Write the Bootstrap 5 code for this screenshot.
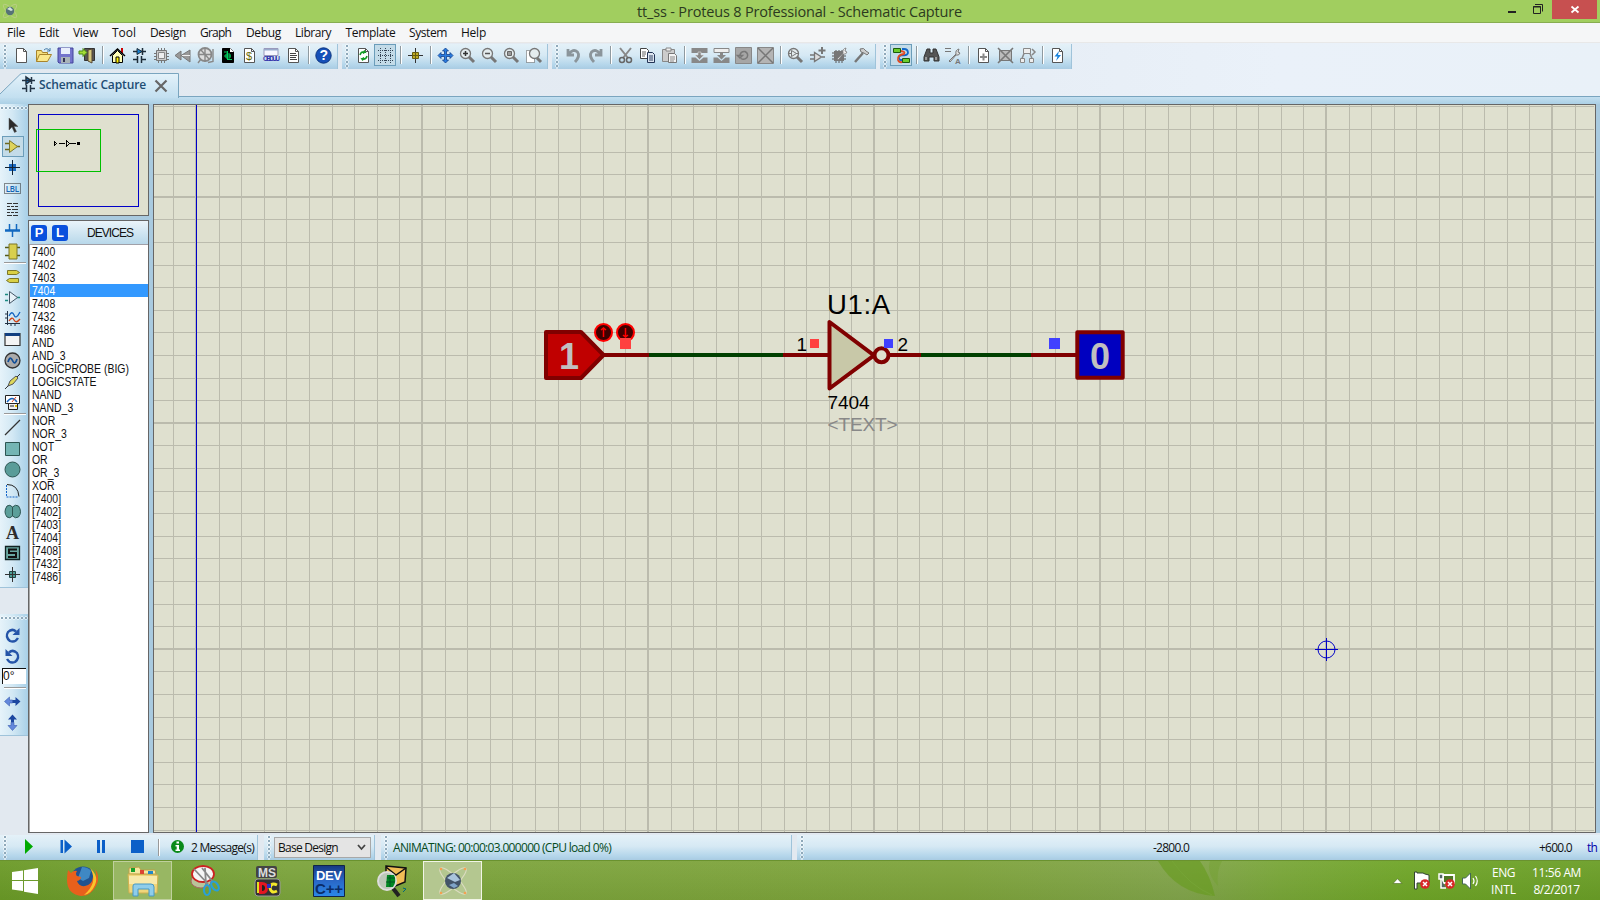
<!DOCTYPE html>
<html lang="en">
<head>
<meta charset="utf-8">
<meta name="viewport" content="width=device-width, initial-scale=1">
<title>tt_ss - Proteus 8 Professional - Schematic Capture</title>
<link href="https://cdn.jsdelivr.net/npm/bootstrap@5.3.0/dist/css/bootstrap.min.css" rel="stylesheet">
<style>
  body{width:1600px;height:900px;overflow:hidden;font:12px/1 "Open Sans","Noto Sans",sans-serif;color:#111;background:#e3eaf1}
  svg{display:block;flex:none}
  .fit{white-space:nowrap;display:inline-block}
  .titlebar{height:23px;background:#a1ce5f;border-bottom:1px solid #87ad50;position:relative}
  .titlebar h1{font-size:14.5px;line-height:23px;margin:0 0 0 637px;color:#2c3a20;font-weight:400}
  .appicon{position:absolute;left:2px;top:3px;opacity:.85}
  .winbtns{position:absolute;right:3px;top:0}
  .menubar{height:20px;background:#f5f6f7;border-bottom:1px solid #e8e8e8;padding-left:7px}
  .menubar .nav-link{padding:0;color:#111;line-height:19px;font-size:12px}
  .upper{height:61px;background:linear-gradient(90deg,#e2e9f0,#e4ebf3 50%,#eaf1f9 80%,#e9f1f8);padding-top:1px}
  .tgroup{height:25px;background:linear-gradient(#e4f1f8,#d6e9f4 45%,#b3d5ea 85%,#a9cbe2);border-right:1px solid #9fc3da;margin-right:4px}
  #bars .tb,#bars .vsep{position:relative;margin-bottom:3px}
  .grip{width:10px;height:25px;flex:none;background:radial-gradient(circle at 2px 2px,#8fa9ba 1px,#fff 1.2px,transparent 2px) 3px 0/10px 4px repeat-y}
  .tb{width:22px;height:22px;padding:0;border:1px solid transparent;border-radius:0;display:flex;align-items:center;justify-content:center;flex:none}
  .tb svg{overflow:visible}
  .tb.active{background:#c3dbe8;border-color:#6b9dba}
  .vsep{width:8px;height:18px;flex:none;background:linear-gradient(90deg,transparent 4px,#8f9aa0 4px,#8f9aa0 5px,#fff 5px,#fff 6px,transparent 6px)}
  .tabrow{height:35px;position:relative}
  .tabrow:after{content:"";position:absolute;left:178px;right:0;bottom:7px;height:1px;background:#7aa5bf}
  .tabrow .band{position:absolute;left:0;right:0;bottom:0;height:7px;background:linear-gradient(#c2dff0,#acd0e5)}
  .tabbox{position:absolute;left:0;top:4px;width:179px;height:25px}
  .tabname{left:39px;top:10px;color:#214d74}
  .work{height:729px;background:#a9cadf}
  .side{width:28px;background:#e2e9f0}
  .vgroup{background:linear-gradient(90deg,#e6f3fa,#d2e8f4 45%,#a8d0e8);border-bottom:1px solid #9fc3da}
  .vgroup .tb{width:22px;height:21px;margin-left:2px}
  .vgroup .tb svg{margin-left:-1px}
  .hgrip{height:11px;background:radial-gradient(circle at 2px 2px,#8fa9ba 1px,#fff 1.2px,transparent 2px) 0 2px/4px 11px repeat-x}
  .hsep{height:4px;margin:0 2px 0 4px;border-top:1px solid #999;background:linear-gradient(#fff 1px,transparent 1px)}
  .angle{width:24px;height:16px;margin:1px 0 3px 2px;background:#fff;border:solid #111;border-width:1px 0 0 1px;font:12px/14px "Liberation Sans",sans-serif}
  .panel{border:1px solid #666;background:#dfe0cf}
  .devhead{height:24px;background:linear-gradient(#eaf4fa,#b8d8ea);border-bottom:1px solid #a0a0a8;padding-left:2px}
  .pl{width:16px;height:16px;background:#0950dd;color:#fff;border-radius:3px;font:bold 13px/16px "Liberation Sans",sans-serif;text-align:center}
  .devs{font:12px/15px "Liberation Sans",sans-serif;background:#fff;flex:1;border-left:1px solid #aaa}
  .devs li{height:13px;padding-left:1.5px}
  .devs span{display:inline-block;transform:scaleX(.87);transform-origin:0 0;white-space:nowrap}
  .devs .sel{background:#3399ff;color:#fff}
  .status{height:27px;padding-top:2px;background:#e2e9f0}
  .status .tgroup,.status .grip{height:25px}
  .task{height:40px;background:linear-gradient(rgba(255,255,255,.05),rgba(0,30,0,.05)),linear-gradient(90deg,#6b9a27,#7ca43c 18%,#7ea33b 60%,#82a44b 74%,#79a638 80%,#6fa527 88%,#6b9e27);border-top:1px solid #6a922f;position:relative}
  .task .slot{height:39px;flex:none;display:flex;align-items:center;justify-content:center;border:1px solid transparent}
  .tray{color:#fff;font-size:12px}
  .tray .fit{line-height:17px}
  .combo{width:97px;height:21px;background:#e4e4e4;border:1px solid #a8a8a8;padding:0 4px 0 3px}
  .leaf{position:absolute;left:1140px;top:0}
</style>
</head>
<body class="d-flex flex-column">
<header class="titlebar">
  <svg class="appicon" width="16" height="16" viewBox="0 0 16 16"><g fill="none" stroke="#c3cf92" stroke-width=".8"><ellipse cx="8" cy="8" rx="9" ry="3" transform="rotate(45 8 8)"/><ellipse cx="8" cy="8" rx="9" ry="3" transform="rotate(-45 8 8)"/></g><circle cx="8" cy="8" r="4.200" fill="#49627c"/><path d="M5 6l3-2 3 3-2 1z" fill="#dce8f2"/></svg>
  <h1><span class="fit" data-w="325">tt_ss - Proteus 8 Professional - Schematic Capture</span></h1>
  <svg class="winbtns" width="95" height="22"><path d="M6 11h8v2H6z" fill="#222"/><path d="M31.500 6.500h7v7h-7zM31 7h8M33 4.500h7.500v7" fill="none" stroke="#222"/><path d="M50 0h45v19H50z" fill="#c75050"/><path d="M69.500 6.500l7 6m0-6l-7 6" stroke="#fff" stroke-width="1.800"/></svg>
</header>
<nav class="menubar">
  <ul class="nav flex-nowrap" id="menu"></ul>
</nav>
<div class="upper">
  <div class="d-flex" id="bars"></div>
  <div class="tabrow">
    <div class="band"></div>
    <svg class="tabbox" viewBox="0 0 179 25"><defs><linearGradient id="tg" x2="0" y2="1"><stop stop-color="#e4f2fa"/><stop offset="1" stop-color="#c2dff0"/></linearGradient></defs><path d="M0 21L20 1.500Q21 .5 23 .5H178.500V25H0z" fill="url(#tg)"/><path d="M0 21L20 1.500Q21 .5 23 .5H178.500V25" fill="none" stroke="#7aa5bf"/>
      <g stroke="#234" fill="none"><path d="M22 7.500h13M26 4v7l5-3.500zM31.500 4v7M22 15.500h4m5 0h4M26.500 12v7M30.500 12v7" fill="#1b78c8" stroke-width="1.500"/></g>
      <path d="M155.500 7.500l11 11m0-11l-11 11" stroke="#666" stroke-width="2.200"/></svg>
    <span class="fit position-absolute fw-semibold tabname" data-w="107">Schematic Capture</span>
  </div>
</div>
<main class="work d-flex">
  <aside class="side">
    <div class="vgroup" id="modes"></div>
    <div style="height:26px"></div>
    <div class="vgroup" id="rotate"></div>
  </aside>
  <section class="d-flex flex-column" style="width:121px">
    <div class="panel" style="height:112px">
      <svg width="119" height="110" viewBox="29 105 119 110" fill="none" shape-rendering="crispEdges"><path d="M38.500 114.500h100v92h-100z" stroke="#0000c8"/><path d="M36.500 129.500h64v42h-64z" stroke="#00c000"/><path d="M59 143.500h6M69 143.500h7" stroke="#000"/><path d="M54.500 142v3l2-1.500zM66.500 141v5l3-2.500z" stroke="#000"/><path d="M77 142h3v3h-3z" fill="#000"/></svg>
    </div>
    <div class="panel d-flex flex-column flex-fill" style="margin-top:4px">
      <div class="devhead d-flex align-items-center"><b class="pl">P</b><b class="pl" style="margin-left:5px">L</b><span class="fit" style="margin-left:19px;font-family:'Liberation Sans',sans-serif" data-w="46">DEVICES</span></div>
      <ul class="devs list-unstyled mb-0" id="devs"></ul>
    </div>
  </section>
  <section class="panel" style="margin-left:4px;width:1443px;height:729px">
    <svg width="1441" height="727" viewBox="154 105 1441 727">
      <path id="minor" stroke="#bbbbad" shape-rendering="crispEdges"/>
      <path id="major" stroke="#bbbbad" stroke-width="2" shape-rendering="crispEdges"/>
      <path d="M196.500 105v727" stroke="#0000c8" shape-rendering="crispEdges"/>
      <g stroke-width="4" stroke="#800000" fill="none">
        <path d="M603 355h46M783 355h46M889 355h32M1031 355h45"/>
        <path d="M649 355h134M921 355h110" stroke="#004000"/>
        <path d="M546 332h35l22.500 23L581 378h-35z" fill="#c00000" stroke-linejoin="round"/>
        <path d="M829.500 322v66.500L874 355.300z" fill="#c8c8a8" stroke-linejoin="round"/>
        <circle cx="881.500" cy="355.300" r="7" fill="#dfe0cf"/>
        <path d="M1077.300 332.300h45.400v45.400h-45.400z" fill="#0000c0" stroke-linejoin="round"/>
      </g>
      <g stroke="#f00" stroke-width="2" fill="#400000"><circle cx="603.500" cy="332.500" r="8.500"/><circle cx="625.500" cy="332.500" r="8.500"/><path d="M603.500 337v-9m-2.500 2l2.500-2 2.500 2M625.500 328v9m-2.500-2l2.500 2 2.500-2" stroke-width="1.500"/></g>
      <path d="M620 338h11v11h-11zM810 339h9v9h-9z" fill="#ff4040"/><path d="M884 339h9v9h-9zM1049 338h11v11h-11z" fill="#4040ff"/>
      <g font-family="Liberation Sans, sans-serif">
        <g font-size="36" font-weight="700" fill="#c0c0c0"><text x="559" y="368.500">1</text><text x="1090" y="368.500">0</text></g>
        <text x="827" y="313.500" font-size="27.500" textLength="63">U1:A</text><text x="827.500" y="408.500" font-size="19" textLength="42">7404</text><text x="827.500" y="430.500" font-size="19" fill="#888" textLength="70">&lt;TEXT&gt;</text>
        <text x="796.500" y="350.500" font-size="19">1</text><text x="897.500" y="350.500" font-size="19">2</text>
      </g>
      <g stroke="#0000c8" fill="none"><circle cx="1326.500" cy="649.500" r="8.500"/><path d="M1315 649.500h23M1326.500 638v23"/></g>
    </svg>
  </section>
</main>
<div class="status d-flex">
  <div class="tgroup d-flex align-items-center" style="width:258px;margin-right:6px">
    <div class="grip"></div>
    <svg width="180" height="25" viewBox="10 835 180 25"><path d="M25 839l8 7.500-8 7.500z" fill="#0a0"/><path d="M60.500 840h2.500v13h-2.500zM64.500 839.500l7.500 7-7.500 7zM97 840h3v13h-3zM102 840h3v13h-3zM131 840h13v13h-13z" fill="#0b5fc8"/><path d="M158.500 839v17" stroke="#999"/><path d="M159.500 839v17" stroke="#fff"/><circle cx="177.500" cy="846.500" r="6.500" fill="#0a8a1a"/><path d="M176.500 841.500h2.500v2h-2.500zM175.500 845h3.500v4.500h1v1.500h-4.500v-1.500h1.200v-3h-1.200z" fill="#fff"/></svg>
    <span class="fit" style="margin-left:1px" data-w="63">2 Message(s)</span>
  </div>
  <div class="tgroup d-flex align-items-center" style="width:111px;margin-right:6px">
    <div class="grip"></div>
    <div class="combo d-flex align-items-center justify-content-between"><span class="fit" data-w="60">Base Design</span><svg width="9" height="7"><path d="M1 1l3.500 4L8 1" fill="none" stroke="#444" stroke-width="1.800"/></svg></div>
  </div>
  <div class="tgroup d-flex align-items-center" style="width:411px;margin-right:5px">
    <div class="grip"></div><span class="fit" style="margin-left:2px;color:#064a1c" data-w="218">ANIMATING: 00:00:03.000000 (CPU load 0%)</span>
  </div>
  <div class="tgroup d-flex align-items-center flex-fill m-0 border-0">
    <div class="grip"></div><span class="fit" style="margin-left:346px" data-w="36">-2800.0</span><span class="fit" style="margin-left:350px" data-w="33">+600.0</span><span class="fit" style="margin-left:15px;color:#00a" data-w="10">th</span>
  </div>
</div>
<footer class="task d-flex">
  <svg class="leaf" width="120" height="39"><path d="M18 0h42q10 14 15 35-38-2-57-35z" fill="#659b1c" opacity=".6"/><path d="M32 0q18 25 40 34" stroke="#79a93c" stroke-opacity=".5" fill="none"/><path d="M70 0q-4 12 8 25-2-15 4-25z" fill="#719f2d" opacity=".4"/></svg>
  <div class="slot" style="width:50px"><svg width="26" height="26"><path d="M0 4l11-1.500V12H0zM12 2.300L26 0v12H12zM0 13h11v10L0 21.500zM12 13h14v13l-14-2.300z" fill="#fff"/></svg></div>
  <div class="slot" style="width:63px"><svg width="32" height="32" viewBox="0 0 32 32"><circle cx="17" cy="14" r="12.500" fill="#21528f"/><path d="M16 2q6 0 9 4l-2 7-6 3-5-3z" fill="#3f88c4"/><path d="M2 5l3 3q3-3 6-2-2 3 0 5l4 1q0 3-4 4 2 6 8 5 7-1 8-9 2 3 1 5 4-4 1-13 6 8 1 17-5 10-15 10Q1 29 1 15q0-5 1-10z" fill="#e8601c"/><path d="M24 3q9 8 5 17-4 9-11 10 7-6 9-13 1-8-3-14z" fill="#fbc52c"/></svg></div>
  <div class="slot" style="width:59px;background:#98b763;border-color:#bfd09d"><svg width="34" height="32" viewBox="0 0 34 32"><path d="M3 3l10-1 2 3h14l1 4H3z" fill="#f6e8a0" stroke="#b9a04a"/><path d="M5 3h4v4H5z" fill="#16a02a"/><path d="M14 5h4v4h-4z" fill="#d43"/><path d="M22 6h5v3h-5z" fill="#28c"/><path d="M2 9l30 1-1 18H3z" fill="#f0d67b" stroke="#d0b050"/><path d="M3 11h28v8H3z" fill="#f8e9aa"/><path d="M7 31V21q0-2 2-2h16q3 0 3 3v9h-5v-7H12v7z" fill="#8fcdea" stroke="#4698c4"/></svg></div>
  <div class="slot" style="width:65px"><svg width="30" height="32" viewBox="0 0 30 32"><ellipse cx="11" cy="16" rx="10" ry="7" fill="#b9c49a" stroke="#a66"/><ellipse cx="13" cy="9" rx="11" ry="8" fill="#f6f6f6" stroke="#c22" stroke-width="1.800"/><path d="M4 4l14 15M12 3l11 14M15 3l1 17" stroke="#888" stroke-width="1.800"/><ellipse cx="17" cy="25" rx="3" ry="5" fill="none" stroke="#28a0d8" stroke-width="2.200"/><ellipse cx="25" cy="21" rx="3" ry="5" transform="rotate(-35 25 21)" fill="none" stroke="#28a0d8" stroke-width="2.200"/></svg></div>
  <div class="slot" style="width:60px"><svg width="27" height="32" viewBox="0 0 27 32"><rect x="2" y="1" width="21" height="12" rx="2" fill="#444"/><rect x="1" y="14" width="25" height="17" rx="3" fill="#333" stroke="#999"/><path d="M3 17h4v11H3z" fill="#e3e021"/><text x="4" y="11.500" font-family="Liberation Sans" font-weight="700" font-size="12" fill="#ddd">MS</text><path d="M5 17h3q6 0 6 6t-6 6H5z" fill="#e41620"/><path d="M8 20q3 0 3 3t-3 3z" fill="#222"/><path d="M23 20q-6-3-7 3 1 6 7 3" fill="none" stroke="#f4e82a" stroke-width="3"/><path d="M13 19h4v4h-4z" fill="#2630c8"/></svg></div>
  <div class="slot" style="width:64px"><svg width="32" height="32" viewBox="0 0 32 32"><defs><linearGradient id="dv" x2="0" y2="1"><stop stop-color="#153880"/><stop offset=".5" stop-color="#2a68c8"/><stop offset="1" stop-color="#2a88e8"/></linearGradient></defs><path d="M.5.5h31v31H.5z" fill="url(#dv)" stroke="#102448"/><g font-family="Liberation Sans" font-weight="700"><text x="3" y="15" font-size="13" fill="#fff" textLength="26">DEV</text><text x="2" y="29" font-size="15" fill="#0b2c68" textLength="28">C++</text></g></svg></div>
  <div class="slot" style="width:62px"><svg width="33" height="34" viewBox="0 0 33 34"><path d="M10 2l20 2-1 14-12 5-7-4z" fill="#f1bd56" stroke="#111" stroke-width="1.500"/><path d="M10 3l10 8 10-7" fill="none" stroke="#111" stroke-width="1.500"/><path d="M16 23l7 9" stroke="#222" stroke-width="4"/><circle cx="11" cy="17" r="9" fill="#bcc8b8" stroke="#ddd" stroke-width="2"/><path d="M11 11h7q3 6-1 12h-7z" fill="#082"/><path d="M11 14h8M10 18h9M14 11v12" stroke="#052"/><path d="M27 24l3 1-3 3" stroke="#067" fill="none"/></svg></div>
  <div class="slot" style="width:59px;background:#b4c790;border-color:#f1f5e6"><svg width="30" height="30" viewBox="0 0 30 30"><g fill="none" stroke="#dcdcc2" stroke-width="1.100"><ellipse cx="15" cy="15" rx="18" ry="5" transform="rotate(45 15 15)"/><ellipse cx="15" cy="15" rx="18" ry="5" transform="rotate(-45 15 15)"/></g><circle cx="15" cy="15" r="8" fill="#435468"/><path d="M9 12l7-5 6 7-5 2z" fill="#a9c4dc"/><path d="M11 19l5-2 4 3-4 2z" fill="#7fa4c8"/><g fill="#f5a050"><circle cx="3" cy="3" r="1.300"/><circle cx="27" cy="3" r="1.300"/><circle cx="3" cy="27" r="1.300"/><circle cx="27" cy="27" r="1.300"/></g></svg></div>
  <div class="tray d-flex ms-auto align-items-start" style="padding-right:19px">
    <svg width="95" height="39" viewBox="1390 861 95 39"><path d="M1393 883.500h9l-4.500-4.800z" fill="#fff" stroke="#4b6b20" stroke-width=".6"/>
      <path d="M1414.500 873v16h2.500v-6h12v-8q-5-1-6-2h-6v-1h-2.500z" fill="#fff" stroke="#343"/><circle cx="1425" cy="884" r="4.800" fill="#d82828"/><path d="M1423 882l4 4m0-4l-4 4" stroke="#fff" stroke-width="1.500"/>
      <path d="M1443 875h11v8h-11z" fill="#4e7624" stroke="#fff" stroke-width="1.800"/><path d="M1439 874h4v5h-4zM1441 879v9h5" fill="#566" stroke="#fff" stroke-width="1.500"/><circle cx="1450" cy="884" r="4.800" fill="#d82828"/><path d="M1448 882l4 4m0-4l-4 4" stroke="#fff" stroke-width="1.500"/>
      <path d="M1462.500 878h3l5-5v16l-5-5h-3z" fill="#fff" stroke="#465"/><path d="M1473 878q2 3 0 6M1475.500 876q3.500 5 0 10" fill="none" stroke="#fff" stroke-width="1.200"/></svg>
    <div class="d-flex flex-column text-center" style="margin:3px 16px 0 6px"><span class="fit" data-w="23">ENG</span><span class="fit" data-w="25">INTL</span></div>
    <div class="d-flex flex-column align-items-center" style="margin-top:3px"><span class="fit" data-w="49">11:56 AM</span><span class="fit" data-w="46">8/2/2017</span></div>
  </div>
</footer>
<script src="https://cdn.jsdelivr.net/npm/bootstrap@5.3.0/dist/js/bootstrap.bundle.min.js"></script>
<script>
const $ = id => document.getElementById(id);
// menu: label, text width, distance to the next item
$('menu').innerHTML = [['File',18,32],['Edit',20,34],['View',25,39],['Tool',24,38],['Design',36,50],['Graph',31,46],['Debug',35,49],['Library',36,50.5],['Template',50,63.5],['System',38,52],['Help',25,40]]
  .map(([t,w,n]) => `<li class="nav-item" style="width:${n}px"><a class="nav-link"><span class="fit" data-w="${w}">${t}</span></a></li>`).join('');

// icons on a 17-unit grid
const page = '<path d="M3.500 1.500h7l3 3v11h-10z" fill="#fff" stroke="#555"/><path d="M10.500 1.500v3h3" fill="none" stroke="#555"/>';
const lens = c => `<path d="M10 10l5 5" stroke="#777" stroke-width="3"/><circle cx="6.500" cy="6.500" r="5" fill="#e4ecee" stroke="#777" stroke-width="1.300"/>${c}`;
const I = {
 new: page,
 open: '<path d="M1.500 14.500v-11h5l1 2h5v3" fill="#f5df7c" stroke="#a8842c"/><path d="M1.500 14.500l3-7h12l-4 7z" fill="#fbe98c" stroke="#a8842c"/><path d="M9 3q3-3 6 1m0-3v3h-3" stroke="#457aa8" fill="none"/>',
 save: '<path d="M1 1h15v15H2l-1-1z" fill="#7373cc" stroke="#44449a"/><path d="M4 1h9v6H4z" fill="#e8eefc"/><path d="M4 10h9v6H4z" fill="#a9b4b9"/><path d="M6 11h2v4H6z" fill="#335"/>',
 exit: '<path d="M5.500 1.500h10v12h-10z" fill="#555" stroke="#333"/><path d="M9 3l4-1v14l-4-2z" fill="#d4c77e" stroke="#543"/><path d="M0 4h4V1.500l4 4-4 4V7H0z" fill="#a4dd38" stroke="#4b8a18"/>',
 home: '<path d="M12 1h2v5h-2z" fill="#c00"/><path d="M3.500 8.500v7h10v-7l-5-5z" fill="#ffffb8" stroke="#000"/><path d="M1 9l7.500-7L16 9" fill="none" stroke="#000" stroke-width="1.500"/><path d="M7 10h3v6H7z" fill="#fff200" stroke="#000"/>',
 sch: '<path d="M2 4.500h13M2 12.500h4m4 0h5M6.500 9v7M10.500 9v7M11.500 1v7" stroke="#1d2c38" stroke-width="1.500"/><path d="M6 1.500v6l5-3z" fill="#1981cf" stroke="#1d2c38"/>',
 chip: '<path d="M1 6.500h15M1 9.500h15M1 12.500h15M5.500 1v15M8.500 1v15M11.500 1v15" stroke="#777" stroke-width="1"/><path d="M3.500 3.500h10v10h-10z" fill="#ccc" stroke="#777"/><path d="M5.500 5.500h6v6h-6z" fill="#eee" stroke="#888"/>',
 view3: '<path d="M0 8.500L6 4v9zM6 8.500L15 3v12z" fill="#999" stroke="#777"/><path d="M7 8.500h8" stroke="#eee"/>',
 globe: '<circle cx="8" cy="7.500" r="6.500" fill="#ddd" stroke="#888" stroke-width="1.800"/><path d="M8 1v14M2 7.500h12M4 3l8 9M11 15.500l5-1V2M4 12l-3 4" stroke="#888" stroke-width="1.400" fill="none"/>',
 pcb: '<path d="M3.500 1.500h8l3 3v11h-11z" fill="#000" stroke="#000"/><path d="M11 1l4 4h-4z" fill="#fff"/><path d="M5 5h4M9 12.500h4M8.500 4v9M5 9h7M7 7h4v4H7z" stroke="#00d060" fill="none"/>',
 bom: page+'<text x="5" y="13" font-size="11" font-family="Liberation Sans" fill="#666600">$</text>',
 code: '<path d="M1 1.500h14v7H1z" fill="#f7f7ff" stroke="#99b"/><path d="M1 2h14v1.500H1z" fill="#9ac"/><text x="0" y="14" font-size="6.500" font-weight="700" font-family="Liberation Sans" fill="#33a" textLength="17">OBDUU</text>',
 doc: page+'<path d="M5 6.500h6M5 8.500h7M5 10.500h6M5 12.500h7" stroke="#444"/>',
 help: '<circle cx="8.500" cy="8.500" r="7.700" fill="#1550b8" stroke="#0c3580"/><text x="4.500" y="13.300" font-size="14" font-weight="700" font-family="Liberation Sans" fill="#fff">?</text>',
 refresh: page+'<path d="M5 8q1-4 5-3l-1-1.500m1 1.500l-2 1.500M12 9q-1 4-5 3l1 1.500M7 12l2-1.500" stroke="#119a22" stroke-width="1.500" fill="none"/>',
 grid: '<path d="M1 3.500h15M1 8.500h15M1 13.500h15M3.500 1v15M8.500 1v15M13.500 1v15" stroke="#345" stroke-dasharray="1 1"/>',
 origin: '<path d="M8.500 1v15M1 8.500h15" stroke="#333"/><path d="M5.500 5.500h6v6h-6z" fill="#c0ac24" stroke="#665c10"/><path d="M8.500 5v7M5 8.500h7" stroke="#665c10"/>',
 pan: '<path d="M8.500 1l3 3h-2v3.500H13v-2l3 3-3 3v-2H9.500V13h2l-3 3-3-3h2V9.500H4v2l-3-3 3-3v2h3.500V4h-2z" fill="#2a7de0" stroke="#123f8c" stroke-width=".8"/>',
 zin: lens('<path d="M4 6.500h5M6.500 4v5" stroke="#333" stroke-width="1.500"/>'),
 zout: lens('<path d="M4 6.500h5" stroke="#555" stroke-width="1.500"/>'),
 zall: lens('<path d="M4.500 4.500h4v4h-4z" fill="#999" stroke="#666"/>'),
 zarea: '<path d="M1.500 3.500h8v12h-8z" fill="#fff" stroke="#555" stroke-dasharray="1 1"/><path d="M12 11l4 4" stroke="#777" stroke-width="3"/><circle cx="9.500" cy="6.500" r="5" fill="#e4ecee" stroke="#777" stroke-width="1.300"/>',
 undo: '<path d="M3 2v6h6M3.500 7.500Q8 1 12.500 5q3 4-2.500 10" fill="none" stroke="#8b959b" stroke-width="2.800"/>',
 redo: '<path d="M14 2v6H8M13.500 7.500Q9 1 4.500 5q-3 4 2.500 10" fill="none" stroke="#8b959b" stroke-width="2.800"/>',
 cut: '<path d="M3 1l8 10M14 1L6 11" stroke="#888" stroke-width="2"/><circle cx="5" cy="13" r="2.500" fill="none" stroke="#666" stroke-width="1.500"/><circle cx="12" cy="13" r="2.500" fill="none" stroke="#666" stroke-width="1.500"/>',
 copy: '<path d="M1.500 1.500h6l2 2v8h-8z" fill="#fff" stroke="#444"/><path d="M3 5h4M3 7h4M3 9h3" stroke="#666"/><path d="M8.500 5.500h5l2 2v8h-7z" fill="#dde6f0" stroke="#235"/><path d="M10 9h4M10 11h4M10 13h4" stroke="#346"/>',
 paste: '<path d="M1.500 2.500h12v12h-12z" fill="#ccc" stroke="#888"/><path d="M5 1h5v3H5z" fill="#eee" stroke="#888"/><path d="M7.500 6.500h6l2 2v7h-8z" fill="#f4f4f4" stroke="#777"/><path d="M9 10h5M9 12h5M9 14h4" stroke="#888"/>',
 bcopy: '<path d="M.5 1h16v5H.5zM.5 10.500h4l4 3.500 4-3.500h4V16H.5z" fill="#888"/><path d="M7 5h3v3h3l-4.500 4.500L4 8h3z" fill="#888" stroke="#ddd" stroke-width=".6"/>',
 bmove: '<path d="M1 1.500h15v4H1z" fill="#eee" stroke="#888"/><path d="M.5 10.500h4l4 3.500 4-3.500h4V16H.5z" fill="#888"/><path d="M7 5h3v3h3l-4.500 4.500L4 8h3z" fill="#888"/>',
 brot: '<path d="M.5.5h16v16H.5z" fill="#a6a6a6" stroke="#888"/><path d="M5 8q1-4 5-3.500 4 2 2 6-3 3-6 1M2.500 8.500h5L5 11z" stroke="#777" stroke-width="1.500" fill="none"/>',
 bdel: '<path d="M.5.5h16v16H.5z" fill="#b4b4b4" stroke="#888"/><path d="M1 1l15 15M16 1L1 16" stroke="#777" stroke-width="1.500"/>',
 pick: lens('<path d="M4.500 3.500v6l5-3zM1 6.500h3m5 0h3" fill="none" stroke="#777"/>'),
 make: '<path d="M5.500 5.500v9l7-4.500zM1 8h4M1 12h4m8-2h3" fill="#ddd" stroke="#777" stroke-width="1.300"/><path d="M13 0v7M9.500 3.500h7" stroke="#777" stroke-width="2"/>',
 pack: '<path d="M1 6h14M1 9h14M1 12h14M5 3v13M8 3v13M11 3v13" stroke="#555"/><path d="M3 4h10v10H3z" fill="#777"/><path d="M6 12l6-6q-1-4 3-5l-1 3 2 1q-1 3-4 2l-5 6z" fill="#eee" stroke="#777" stroke-width=".8"/>',
 decomp: '<path d="M2 15l8-9" stroke="#777" stroke-width="2.500"/><path d="M7 2q4-2 6 2l3 2-2 2-3-2-3-1z" fill="#ccc" stroke="#777"/>',
 wire: '<path d="M9 2h2q4 0 4 4-1 3-6 2Q4 9 7 13h3" fill="none" stroke="#1268c8" stroke-width="1.800"/><path d="M6 4q7 0 5 3-7 1-6 6 1 3 5 2" fill="none" stroke="#e04a20" stroke-width="1.800"/><path d="M.5 1.500h7v4h-7zM9.500 11.500h7v4h-7z" fill="#6ccc2c" stroke="#1c5c0c"/>',
 find: '<path d="M4 2h3v4h3V2h3l3 8v4h-5v-4H6v4H1v-4z" fill="#555" stroke="#333"/><path d="M3 10v3M13 10v3" stroke="#ddd"/>',
 prop: '<path d="M0 1.500h6M0 4.500h6" stroke="#777"/><path d="M4 14l7-7q-1-4 3-5l-1 3 2 1q-1 3-4 2l-6 7z" fill="#ddd" stroke="#777"/><text x="10" y="16.500" font-size="8" font-weight="700" font-family="Liberation Sans" fill="#777">A</text>',
 addp: page+'<path d="M8.500 6.500v7M5 10h7" stroke="#888" stroke-width="2"/>',
 delp: '<path d="M2.500 3.500h12v10h-12z" fill="#bbb" stroke="#777"/><path d="M1 1l15 15M16 1L1 16" stroke="#777" stroke-width="1.600"/>',
 zoomc: '<path d="M4.500 1.500h7v5h-7zM1.500 11.500h4v4h-4zM10.500 11.500h4v4h-4z" fill="#eee" stroke="#888"/><path d="M5 6.500l-2 5M11 6.500l2 5M13 2l3 3-3 3" stroke="#888" fill="none" stroke-width="1.500"/>',
 erc: page+'<path d="M10 4L5.500 9.500h3L7 14l5-6H9z" fill="#1c84dc"/>',
 sel: '<path d="M5 1v12l3-3 2.500 5.500 2-1L10 9.500h4z" fill="#2b2b2b" stroke="#555" stroke-width=".5"/>',
 comp: '<path d="M1 5.500h4M1 11.500h4M12 8.500h4" stroke="#6d6820" stroke-width="1.300"/><path d="M5.500 2.500v12l8-6z" fill="#dfd45c" stroke="#7c7728"/>',
 junc: '<path d="M5 5h7v7H5z" fill="#1968c0"/><path d="M8.500 1v15M1 8.500h15" stroke="#123"/>',
 lbl: '<path d="M.5 3.500h16v10H.5z" fill="none" stroke="#222" stroke-dasharray="1 1"/><text x="2" y="12" font-size="9.500" font-family="Liberation Sans" font-weight="700" fill="#1464b4" textLength="13" lengthAdjust="spacingAndGlyphs">LBL</text>',
 txt: '<path d="M3 2.500h5m1 0h5M3 5.500h3m1 0h3m1 0h3M3 8.500h4m1 0h6M3 11.500h3m1 0h3m1 0h3M3 14.500h5m1 0h5" stroke="#333"/>',
 bus: '<path d="M1 8.500h15" stroke="#1268c0" stroke-width="2.500"/><path d="M5.500 2v6M12.500 2v6M8.500 9v6" stroke="#1268c0" stroke-width="1.500"/>',
 sub: '<path d="M1 4.500h15M1 12.500h15" stroke="#555a18" stroke-width="1.300"/><path d="M5 1h8v15H5z" fill="#d8cf4e" stroke="#7c7728"/>',
 term: '<path d="M3.500 2.500h9l3 2-3 2h-9zM5.500 10.500h9v4h-9l-3-2z" fill="#d9d045" stroke="#7c7728"/>',
 pin: '<path d="M1 5.500h3M1 11.500h3M13 8.500h3" stroke="#1b8a80" stroke-width="1.400"/><path d="M5.500 2.500v12l8-6z" fill="#e7f2f8" stroke="#456"/>',
 graph: '<path d="M3.500 1v14M1 13.500h15M1 4h3M1 8h3M7 13v3M11 13v3" stroke="#234"/><path d="M5 6q3-6 5-1t6-3" fill="none" stroke="#1464c0" stroke-width="1.300"/><path d="M5 11q3-5 5-1t6-1" fill="none" stroke="#d04010" stroke-width="1.300"/>',
 popup: '<path d="M1 2.500h15v12H1z" fill="#f4f4f4" stroke="#333" stroke-width="1.200"/><path d="M1 2h15v3H1z" fill="#123f80"/>',
 gen: '<circle cx="8.500" cy="8.500" r="7.500" fill="#aaa" stroke="#333" stroke-width="1.300"/><path d="M4 10q2-7 4.500-1.500T13 7" fill="none" stroke="#124f98" stroke-width="1.800"/>',
 probe: '<path d="M1 16l4-4M13 4l3-3" stroke="#333"/><path d="M4 13l2-5 6-5 2 2-5 6z" fill="#ded85c" stroke="#555"/>',
 meter: '<path d="M1.500 1.500h14v8h-14z" fill="#fff" stroke="#222"/><path d="M3 8q5-7 10 0" fill="none" stroke="#1464c0" stroke-width="1.500"/><path d="M8 8l4-5" stroke="#d42"/><path d="M4.500 9.500h9v6h-9z" fill="#eee" stroke="#222"/><path d="M6 12h4" stroke="#222"/><path d="M11 11h2v2h-2z" fill="#db0"/>',
 line: '<path d="M1 16L16 1" stroke="#333" stroke-width="1.200"/>',
 box: '<path d="M1.500 2.500h14v13h-14z" fill="#74b5b4" stroke="#2d5552"/>',
 circ: '<circle cx="8.500" cy="8.500" r="7.500" fill="#5a9c99" stroke="#2d5552"/>',
 arc: '<path d="M2.500 3v12h12" fill="none" stroke="#1464c8" stroke-dasharray="2 1"/><path d="M3 2.500q11 0 12 12" fill="none" stroke="#222"/>',
 path: '<path d="M8.500 4Q6 1 3 3-1 9 3 14q3 2 5.500-1 3 3 6 1 4-5 0-11-3-2-6 1zv9" fill="#5c9f9a" stroke="#2d5552"/>',
 A: '<text x="2" y="14.500" font-size="18" font-weight="700" font-family="Liberation Serif" fill="#2c2c2c">A</text>',
 S: '<path d="M1.500 1.500h14v13h-14z" fill="#6aa8a2" stroke="#122" stroke-width="1.300"/><path d="M13 4.500H5v3.500h7v4H4" fill="none" stroke="#111" stroke-width="2"/>',
 mark: '<path d="M5.500 5.500h6v6h-6z" fill="#4f9f97" stroke="#244"/><path d="M8.500 1v15M1 8.500h15" stroke="#333"/>',
 cw: '<path d="M12 4.500Q8 1 4 5q-3 5 2 9 5 2 8-3" fill="none" stroke="#2554a8" stroke-width="2.400"/><path d="M15.500 1v7h-7z" fill="#2554a8"/>',
 ccw: '<path d="M5 4.500Q9 1 13 5q3 5-2 9-5 2-8-3" fill="none" stroke="#2554a8" stroke-width="2.400"/><path d="M1.500 1v7h7z" fill="#2554a8"/>',
 fh: '<path d="M.5 8.500l5-4.500v3h3v3h-3v3z" fill="#6388dc" stroke="#3a5cb0" stroke-width=".6"/><path d="M16.500 8.500l-5-4.500v3h-3v3h3v3z" fill="#1c47a0"/>',
 fv: '<path d="M8.500.5L13 5.500h-3v3H7v-3H4z" fill="#1c47a0"/><path d="M8.500 16.500l4.500-5h-3v-3H7v3H4z" fill="#6388dc" stroke="#3a5cb0" stroke-width=".6"/>'
};
const btn = n => {
  const on = n[0] === '*'; if (on) n = n.slice(1);
  return `<button class="btn tb${on ? ' active' : ''}" type="button" aria-label="${n}"><svg width="17" height="17" viewBox="0 0 17 17" fill="none">${I[n]}</svg></button>`;
};
const row = (s, sep) => s.split(' ').map(n => n === '|' ? `<div class="${sep}"></div>` : btn(n)).join('');
$('bars').innerHTML = [
  ['new open save exit | home sch chip view3 globe pcb bom code doc | help', 338],
  ['refresh *grid | origin | pan zin zout zall zarea', 206],
  ['undo redo | cut copy paste | bcopy bmove brot bdel | pick make pack decomp', 324],
  ['*wire | find prop | addp delp zoomc | erc', 192]
].map(([s, w]) => `<div class="tgroup d-flex align-items-center" style="width:${w}px"><div class="grip"></div>${row(s, 'vsep')}</div>`).join('');
$('modes').innerHTML = '<div class="hgrip"></div>' + row('sel *comp junc lbl txt bus sub | term pin graph popup gen probe meter | line box circ arc path A S mark', 'hsep') + '<div style="height:2px"></div>';
$('rotate').innerHTML = '<div class="hgrip"></div>' + row('cw ccw', '') + '<div class="angle">0°</div><div class="hsep"></div>' + row('fh fv', '') + '<div style="height:2px"></div>';
$('devs').innerHTML = '7400,7402,7403,7404,7408,7432,7486,AND,AND_3,LOGICPROBE (BIG),LOGICSTATE,NAND,NAND_3,NOR,NOR_3,NOT,OR,OR_3,XOR,[7400],[7402],[7403],[7404],[7408],[7432],[7486]'
  .split(',').map(t => `<li${t === '7404' ? ' class="sel"' : ''}><span>${t}</span></li>`).join('');

// sheet grid: one line per 22.6px, every tenth is heavy
let a = '', b = '';
for (let k = -2; k < 63; k++) {
  const x = 196 + 22.6 * k, y = 197 + 22.6 * (k - 4);
  if (k % 10 === 0 && k) b += `M${Math.round(x)} 105V832`; else a += `M${Math.round(x - (k ? 0 : 1)) + .5} 105V832`;
  if (y > 833) continue;
  if ((k - 4) % 10 === 0) b += `M154 ${Math.round(y)}H1594`; else a += `M154 ${Math.floor(y + .35) + .5}H1594`;
}
$('minor').setAttribute('d', a); $('major').setAttribute('d', b);

// tighten each label to its measured width
document.querySelectorAll('[data-w]').forEach(e => {
  const r = document.createRange(); r.selectNodeContents(e);
  e.style.letterSpacing = (e.dataset.w - r.getBoundingClientRect().width) / e.textContent.length + 'px';
});
</script>
</body>
</html>
